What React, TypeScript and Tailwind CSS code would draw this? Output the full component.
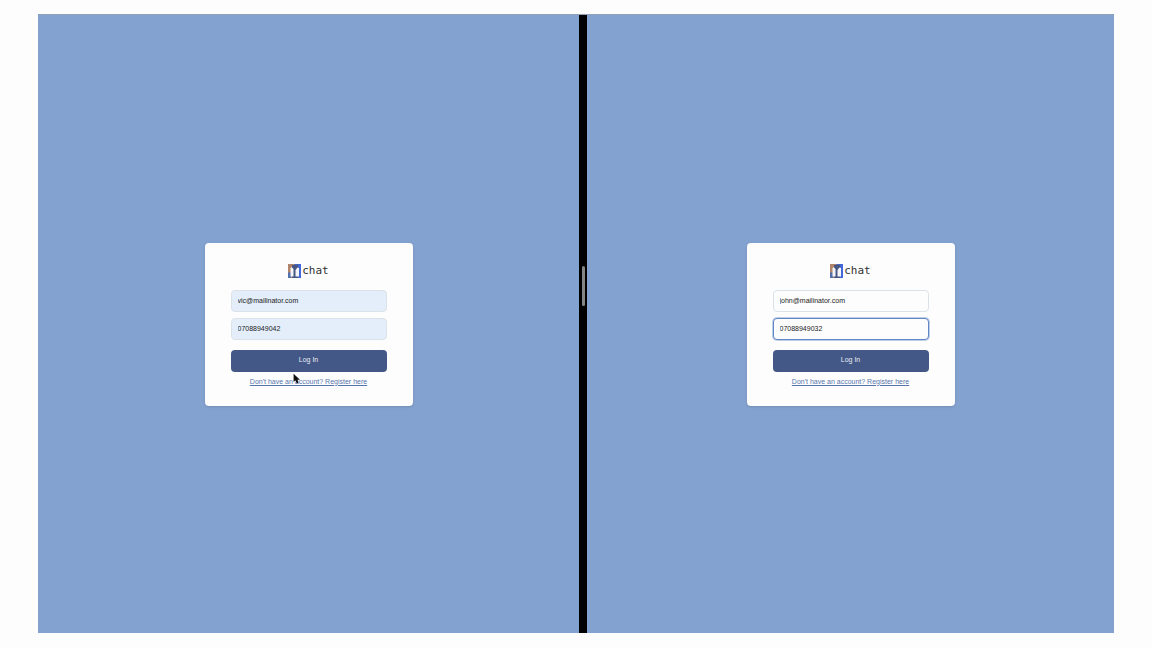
import { useState } from "react";

function Logo() {
  return (
    <svg viewBox="0 0 26 28" className="h-[14px] w-[13px]" aria-hidden="true">
      <rect width="26" height="28" fill="#4566c9" />
      <path d="M0 0h13v28H0z" fill="#b08468" />
      <path d="M0 17h6v11H0z" fill="#526fae" />
      <path d="M8 2h12v26H8z" fill="#465783" />
      <path d="M5 9l2-3 4 4v15H5z" fill="#f4f5f7" />
      <path d="M15 12l4-5 3 1v17h-7z" fill="#f4f5f7" />
      <path d="M22 0h4v28h-4z" fill="#4269dc" />
    </svg>
  );
}

function Cursor() {
  return (
    <svg viewBox="0 0 12 18" className="absolute left-[88px] top-[130px] h-[11px] w-[7px]" aria-hidden="true">
      <path d="M1 1v14l3-3 2.500 5.500 3-1.500L7.500 11H12z" fill="#111" />
    </svg>
  );
}

type LoginProps = {
  email: string;
  phone: string;
  autofilled?: boolean;
  active?: boolean;
  pointer?: boolean;
};

function LoginPane({ email, phone, autofilled, active, pointer }: LoginProps) {
  const [mail, setMail] = useState(email);
  const [number, setNumber] = useState(phone);
  const field =
    "h-[22px] w-full rounded border px-1.5 text-[7px] text-[#222] outline-none " +
    (autofilled ? "bg-[#e3eefa]" : "bg-[#fdfdfd]");

  return (
    <section className="flex items-center justify-center bg-[#84a2d0]">
      <form
        onSubmit={(e) => e.preventDefault()}
        className="relative flex w-52 flex-col items-center rounded bg-[#fdfdfd] px-[26px] pt-[21px] pb-5 shadow-sm"
      >
        <h1 className="mb-3 flex items-center gap-px font-['DejaVu_Sans_Mono',monospace] text-[11px] leading-[14px] text-[#333]">
          <Logo />
          chat
        </h1>
        <input
          aria-label="Email"
          type="email"
          value={mail}
          onChange={(e) => setMail(e.target.value)}
          className={`${field} border-[#dce2e9]`}
        />
        <input
          aria-label="Phone number"
          type="tel"
          value={number}
          onChange={(e) => setNumber(e.target.value)}
          className={`${field} mt-1.5 ${active ? "border-[#6187c5] ring-1 ring-[#6187c5]/40" : "border-[#dce2e9]"}`}
        />
        <button type="submit" className="mt-[10px] h-[22px] w-full rounded bg-[#445888] text-[7px] text-[#e8ecf4]">
          Log In
        </button>
        <a href="#register" className="mt-[5px] text-[7px] leading-[9px] whitespace-nowrap text-[#5775ad] underline">
          Don't have an account? Register here
        </a>
        {pointer && <Cursor />}
      </form>
    </section>
  );
}

export default function App() {
  return (
    <main className="flex min-h-screen bg-[#fdfdfd] px-[38px] pt-[14px] pb-[15px] font-['Liberation_Sans',Arial,sans-serif]">
      <div className="grid flex-1 grid-cols-[541fr_8px_527fr] border-t border-[#929fb9]">
        <LoginPane email="vic@mailinator.com" phone="07088949042" autofilled pointer />
        <div className="flex items-center justify-center bg-black">
          <span className="mb-[76px] h-10 w-[3px] rounded-full bg-[#858585]" />
        </div>
        <LoginPane email="john@mailinator.com" phone="07088949032" active />
      </div>
    </main>
  );
}
